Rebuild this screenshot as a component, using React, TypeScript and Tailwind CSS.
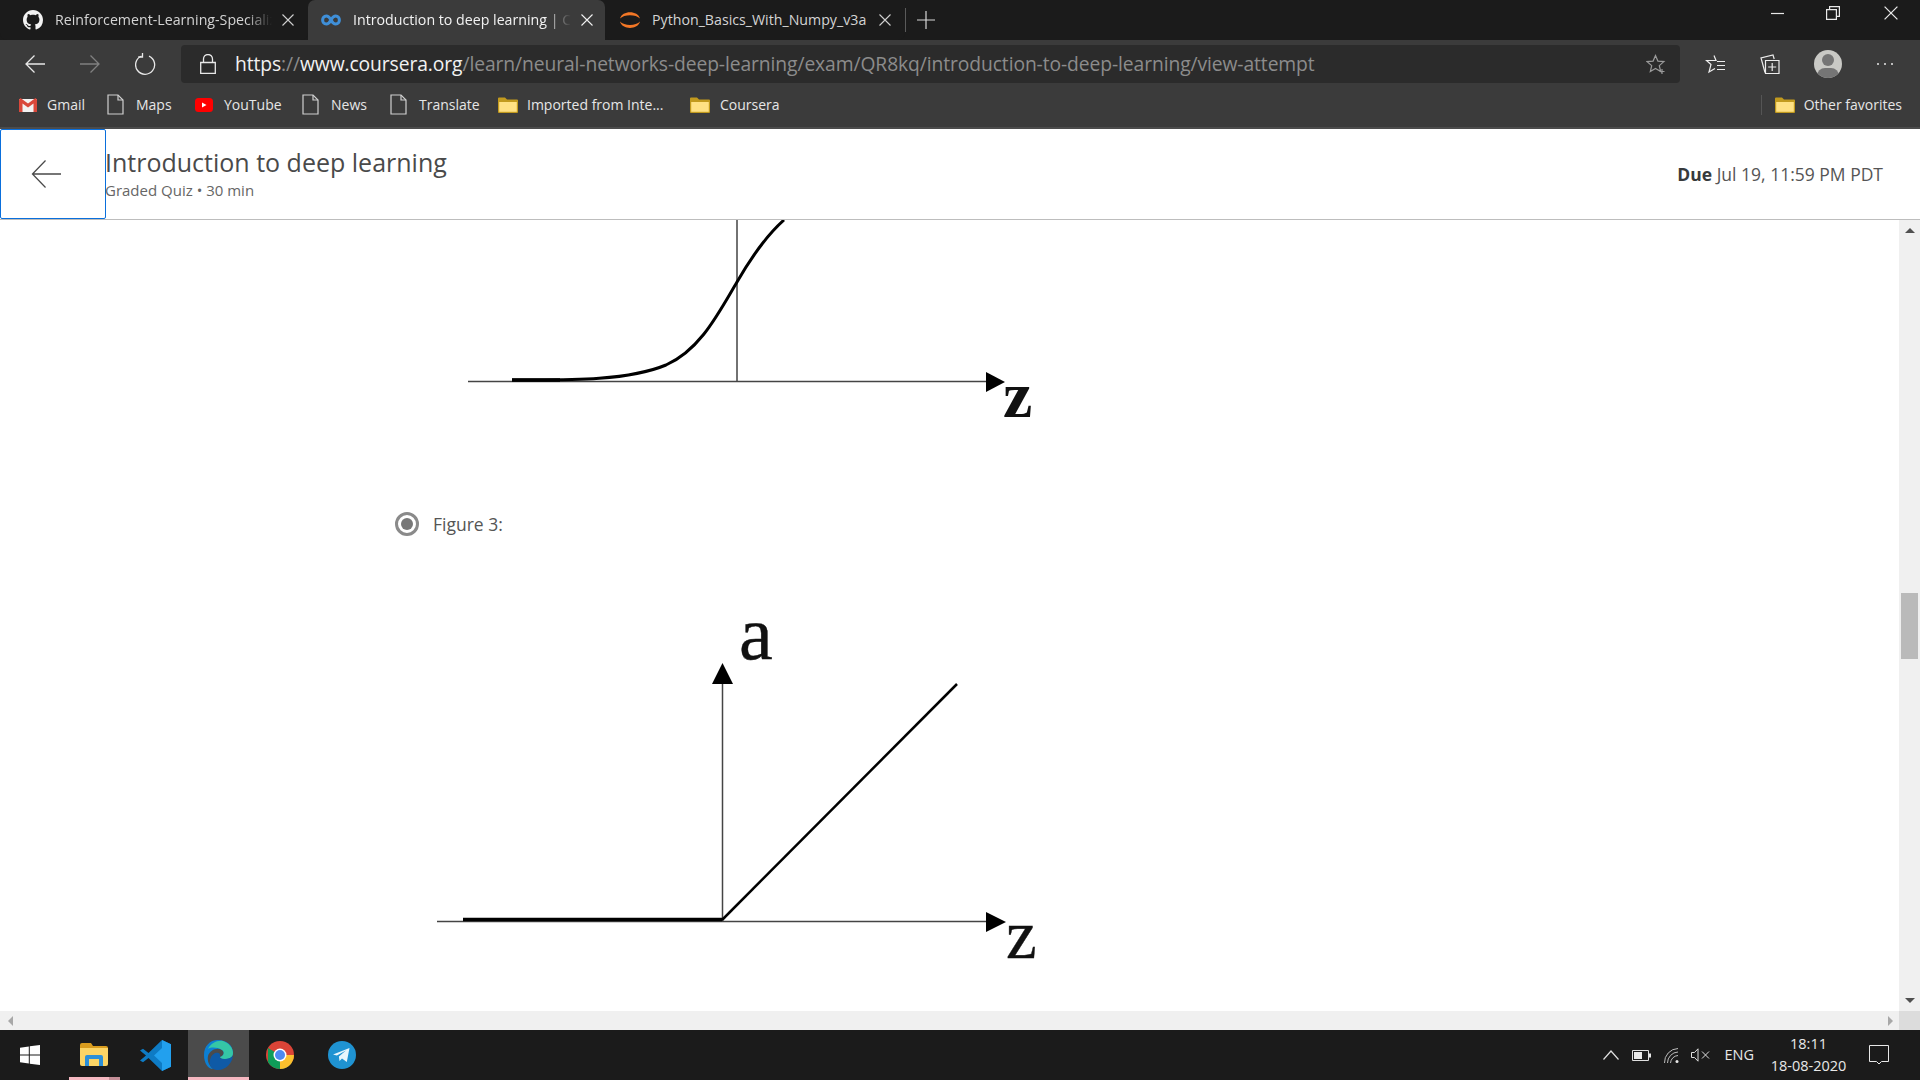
import React from 'react';

const ui = "font-['Open_Sans',sans-serif]";

function GithubIcon() {
  return (
    <svg width="20" height="20" viewBox="0 0 16 16" fill="#f2f2f2">
      <path d="M8 0C3.58 0 0 3.58 0 8c0 3.54 2.29 6.53 5.47 7.59.4.07.55-.17.55-.38 0-.19-.01-.82-.01-1.49-2.01.37-2.53-.49-2.69-.94-.09-.23-.48-.94-.82-1.13-.28-.15-.68-.52-.01-.53.63-.01 1.08.58 1.23.82.72 1.21 1.87.87 2.33.66.07-.52.28-.87.51-1.07-1.78-.2-3.64-.89-3.64-3.95 0-.87.31-1.59.82-2.15-.08-.2-.36-1.02.08-2.12 0 0 .67-.21 2.2.82.64-.18 1.32-.27 2-.27s1.36.09 2 .27c1.53-1.04 2.2-.82 2.2-.82.44 1.1.16 1.92.08 2.12.51.56.82 1.27.82 2.15 0 3.07-1.87 3.75-3.65 3.95.29.25.54.73.54 1.48 0 1.07-.01 1.93-.01 2.2 0 .21.15.46.55.38A8.01 8.01 0 0 0 16 8c0-4.42-3.58-8-8-8z" />
    </svg>
  );
}

function CourseraIcon() {
  return (
    <svg width="20" height="12" viewBox="0 0 20 12" fill="none" stroke="#3f8fd8" strokeWidth="3">
      <path d="M10 6C8.6 3.2 7.2 2 5.2 2 3 2 1.6 3.8 1.6 6s1.4 4 3.6 4c2 0 3.4-1.2 4.8-4s2.8-4 4.8-4c2.2 0 3.6 1.8 3.6 4s-1.4 4-3.6 4c-2 0-3.4-1.2-4.8-4z" />
    </svg>
  );
}

function JupyterIcon() {
  return (
    <svg width="20" height="20" viewBox="0 0 20 20" fill="#f37726">
      <path d="M0 8.500C2 0 18 0 20 8.500 16 4 4 4 0 8.500z" />
      <path d="M0 11.500C2 20 18 20 20 11.500 16 16 4 16 0 11.500z" />
    </svg>
  );
}

function CloseIcon({ size = 12, color = '#d8d8d8' }: { size?: number; color?: string }) {
  return (
    <svg width={size} height={size} viewBox="0 0 12 12" stroke={color} strokeWidth="1.1">
      <path d="M.5.5l11 11M11.500.5l-11 11" />
    </svg>
  );
}

function DocIcon() {
  return (
    <svg width="17" height="21" viewBox="0 0 17 21" fill="none" stroke="#d0d0d0" strokeWidth="1.2">
      <path d="M1 1h10l5 5v14H1z" />
      <path d="M11 1v5h5" />
    </svg>
  );
}

function FolderIcon() {
  return (
    <svg width="20" height="16" viewBox="0 0 20 16">
      <path d="M0 1.500A1 1 0 0 1 1 .5h6l2 2h10a1 1 0 0 1 1 1V15a1 1 0 0 1-1 1H1a1 1 0 0 1-1-1z" fill="#c29a1e" />
      <path d="M1.200 5h17.600v9.800H1.200z" fill="#ffe184" />
    </svg>
  );
}

function GmailIcon() {
  return (
    <svg width="18" height="14" viewBox="0 0 18 14">
      <path d="M0 1h18v13H0z" fill="#f2f2f2" />
      <path d="M0 1.500V14h3.500V5.500L9 9.500l5.500-4V14H18V1.500L16.500 0 9 5.500 1.500 0z" fill="#d9483b" />
    </svg>
  );
}

function YoutubeIcon() {
  return (
    <svg width="18" height="14" viewBox="0 0 18 14">
      <rect width="18" height="14" rx="3.500" fill="#f00" />
      <path d="M7 4.500L11.500 7 7 9.500z" fill="#fff" />
    </svg>
  );
}

function Bookmark({ icon, label, gap, width }: { icon: React.ReactNode; label: string; gap: string; width: string }) {
  return (
    <div className={`flex items-center ${gap} ${width}`}>
      {icon}
      <span className="whitespace-nowrap text-[14px] text-[#e6e6e6]">{label}</span>
    </div>
  );
}

function Tab({
  icon,
  label,
  width,
  pad,
  textWidth,
  active,
  fade,
}: {
  icon: React.ReactNode;
  label: string;
  width: string;
  pad: string;
  textWidth: string;
  active?: boolean;
  fade?: boolean;
}) {
  return (
    <div
      className={`flex h-[40px] shrink-0 items-center pb-[1px] ${width} ${pad} ${
        active ? 'rounded-t-[7px] bg-[#3b3b3b]' : 'rounded-b-[7px] bg-[#1b1b1b]'
      }`}
    >
      <div className="flex w-[20px] shrink-0 justify-center">{icon}</div>
      <div
        className={`ml-[12px] overflow-hidden whitespace-nowrap text-[14.200px] ${textWidth} ${active ? 'text-[#f2f2f2]' : 'text-[#d4d4d4]'} ${
          fade ? '[mask-image:linear-gradient(to_right,black_88%,transparent)]' : ''
        }`}
      >
        {label}
      </div>
      <div className="ml-[10px] shrink-0">
        <CloseIcon color={active ? '#f2f2f2' : '#d0d0d0'} />
      </div>
    </div>
  );
}

function TitleBar() {
  return (
    <div className="flex h-[40px] items-center bg-[#1b1b1b]">
      <Tab icon={<GithubIcon />} label="Reinforcement-Learning-Specialization" width="w-[308px]" pad="pl-[23px]" textWidth="w-[217px]" fade />
      <Tab icon={<CourseraIcon />} label="Introduction to deep learning | Coursera" width="w-[297px]" pad="pl-[13px]" textWidth="w-[218px]" active fade />
      <Tab icon={<JupyterIcon />} label="Python_Basics_With_Numpy_v3a" width="w-[300px]" pad="pl-[15px]" textWidth="w-[217px]" />
      <div className="h-[24px] w-px bg-[#5a5a5a]" />
      <svg className="ml-[11px]" width="18" height="18" viewBox="0 0 18 18" stroke="#d8d8d8" strokeWidth="1.200">
        <path d="M9 0v18M0 9h18" />
      </svg>
      <div className="ml-auto flex h-full items-start pt-[6px]">
        <svg width="14" height="14" viewBox="0 0 14 14" stroke="#e8e8e8" strokeWidth="1.200">
          <path d="M0 7.500h13" />
        </svg>
        <svg className="ml-[41px]" width="14" height="14" viewBox="0 0 14 14" fill="none" stroke="#e8e8e8" strokeWidth="1.200">
          <path d="M.6 3.600h9.800v9.800H.6zM3.600 3.600V.6h9.800v9.800h-3" />
        </svg>
        <div className="mx-[22px] ml-[44px]">
          <CloseIcon size={14} color="#e8e8e8" />
        </div>
      </div>
    </div>
  );
}

function Toolbar() {
  return (
    <div className="flex h-[43px] items-start bg-[#3b3b3b] pt-[5px]">
      <div className="flex h-[38px] w-[181px] shrink-0 items-center pl-[25px]">
        <svg width="20" height="18" viewBox="0 0 20 18" fill="none" stroke="#e8e8e8" strokeWidth="1.300">
          <path d="M20 9H1M9.500.5L1 9l8.500 8.500" />
        </svg>
        <svg className="ml-[35px]" width="20" height="18" viewBox="0 0 20 18" fill="none" stroke="#808080" strokeWidth="1.300">
          <path d="M0 9h19M10.500.5L19 9l-8.500 8.500" />
        </svg>
        <svg className="ml-[35px]" width="21" height="22" viewBox="0 0 21 22" fill="none" stroke="#e8e8e8" strokeWidth="1.300">
          <path d="M14 3.100A9.500 9.500 0 1 1 6.500 3" />
          <path d="M7.500-.2V4H3.200" />
        </svg>
      </div>
      <div className="flex h-[38px] w-[1499px] shrink-0 items-center rounded-[4px] bg-[#2b2b2b] pl-[19px]">
        <svg width="16" height="20" viewBox="0 0 16 20" fill="none" stroke="#e8e8e8" strokeWidth="1.300">
          <path d="M.7 8.500h14.600v11H.7zM3.500 8.500V5a4.500 4.500 0 0 1 9 0v3.500" />
        </svg>
        <div className="ml-[19px] whitespace-nowrap pt-[1px] text-[19.300px] tracking-[-0.1px] text-[#8c8c8c]">
          <span className="text-[#f2f2f2]">https</span>://<span className="text-[#f2f2f2]">www.coursera.org</span>
          /learn/neural-networks-deep-learning/exam/QR8kq/introduction-to-deep-learning/view-attempt
        </div>
        <svg className="ml-auto mr-[14px]" width="20" height="20" viewBox="0 0 20 20" fill="none" stroke="#9a9a9a" strokeWidth="1.200">
          <path d="M9.500 1.500l2.400 5.600 6 .5-4.600 4 1.400 5.900-5.200-3.100-5.200 3.100 1.400-5.900-4.600-4 6-.5zM16 15v5M13.500 17.500h5" />
        </svg>
      </div>
      <div className="flex h-[38px] flex-1 items-center pl-[25px]">
        <svg width="21" height="21" viewBox="0 0 21 21" fill="none" stroke="#ececec" strokeWidth="1.200">
          <path d="M9 1.500l2 5H1.500l4.500 4-2 7.500 6-3.500M12 7.500h8M12 11.500h8M12 15.500h8" />
        </svg>
        <svg className="ml-[34px]" width="20" height="20" viewBox="0 0 20 20" fill="none" stroke="#ececec" strokeWidth="1.200">
          <path d="M5 18.500L1 4l12-3 1.200 4" />
          <path d="M5.500 6.500h13.500v13H5.500zM12.200 9v8M8.200 13h8" />
        </svg>
        <div className="relative ml-[34px] h-[28px] w-[28px] overflow-hidden rounded-full bg-[#c9c9c5]">
          <div className="absolute left-[8px] top-[4px] h-[12px] w-[12px] rounded-full bg-[#757575]" />
          <div className="absolute left-[3px] top-[18px] h-[16px] w-[22px] rounded-full bg-[#757575]" />
        </div>
        <div className="ml-[35px] flex gap-[5px]">
          <div className="h-[2px] w-[2px] rounded-full bg-[#e8e8e8]" />
          <div className="h-[2px] w-[2px] rounded-full bg-[#e8e8e8]" />
          <div className="h-[2px] w-[2px] rounded-full bg-[#e8e8e8]" />
        </div>
      </div>
    </div>
  );
}

function BookmarksBar() {
  return (
    <div className="flex h-[46px] items-center border-b-2 border-[#4c4c4c] bg-[#3b3b3b] pb-[1px] pl-[19px]">
      <Bookmark icon={<GmailIcon />} label="Gmail" gap="gap-[10px]" width="w-[88px]" />
      <Bookmark icon={<DocIcon />} label="Maps" gap="gap-[12px]" width="w-[88px]" />
      <Bookmark icon={<YoutubeIcon />} label="YouTube" gap="gap-[11px]" width="w-[107px]" />
      <Bookmark icon={<DocIcon />} label="News" gap="gap-[12px]" width="w-[88px]" />
      <Bookmark icon={<DocIcon />} label="Translate" gap="gap-[12px]" width="w-[108px]" />
      <Bookmark icon={<FolderIcon />} label="Imported from Inte..." gap="gap-[9px]" width="w-[192px]" />
      <Bookmark icon={<FolderIcon />} label="Coursera" gap="gap-[10px]" width="w-[100px]" />
      <div className="ml-auto mr-[13px] h-[20px] w-px bg-[#555]" />
      <div className="pr-[18px]">
        <Bookmark icon={<FolderIcon />} label="Other favorites" gap="gap-[9px]" width="" />
      </div>
    </div>
  );
}

function PageHeader() {
  return (
    <div className="flex h-[91px] items-stretch border-b border-[#bdbdbd] bg-white">
      <div className="flex h-[90px] w-[106px] shrink-0 items-center rounded-[2px] border border-[#0a6fdc] pl-[30px]">
        <svg width="30" height="30" viewBox="0 0 31 30" fill="none" stroke="#4a4a4a" strokeWidth="1.300">
          <path d="M31 15H1.500M15 1L1.500 15 15 29" />
        </svg>
      </div>
      <div className="-ml-px flex flex-col pt-[15px]">
        <div className="text-[25px] leading-[36px] text-[#4a4a4a]">Introduction to deep learning</div>
        <div className="text-[15px] leading-[20px] text-[#666]">Graded Quiz • 30 min</div>
      </div>
      <div className="ml-auto self-center pr-[37px] text-[17.500px] text-[#555]">
        <span className="font-bold text-[#373a3c]">Due</span> Jul 19, 11:59 PM PDT
      </div>
    </div>
  );
}

function FigureTwo() {
  return (
    <svg className="ml-[430px] mt-[84px] block" width="620" height="351" viewBox="430 620 620 351">
      <path d="M437 921.500H990M722.500 684V921" stroke="#444" strokeWidth="1.500" fill="none" />
      <path d="M463 919.500H722" stroke="#000" strokeWidth="3.500" />
      <path d="M722 920L957 684" stroke="#000" strokeWidth="2.500" />
      <path d="M722.500 663L733 684H712zM1006 922L986 912V932z" fill="#000" />
      <text x="739" y="659" fontSize="76" stroke="#111" strokeWidth="0.4" className="font-['Liberation_Serif',serif]" fill="#111">
        a
      </text>
      <text x="1006" y="958" fontSize="69" stroke="#111" strokeWidth="0.4" className="font-['Liberation_Serif',serif]" fill="#111">
        z
      </text>
    </svg>
  );
}

function FigureOne() {
  return (
    <svg className="ml-[430px] block" width="620" height="200" viewBox="430 220 620 200">
      <path d="M468 381.500H990M737 220V381" stroke="#444" strokeWidth="1.500" fill="none" />
      <path
        d="M512 380C560 380 625 382 666 365C700 350 718 314 737 282C752 256 766 236 784 220"
        stroke="#000"
        strokeWidth="3"
        fill="none"
      />
      <path d="M512 380H560" stroke="#000" strokeWidth="3.500" />
      <path d="M1005 382L986 372V392z" fill="#000" />
      <text x="1003" y="417" fontSize="66" fontWeight="700" className="font-['Liberation_Serif',serif]" fill="#111">
        z
      </text>
    </svg>
  );
}

function VerticalScrollbar() {
  return (
    <div className="flex w-[21px] shrink-0 flex-col items-center bg-[#f0f0f0] pt-[8px]">
      <div className="h-0 w-0 border-x-[5px] border-b-[5px] border-x-transparent border-b-[#505050]" />
      <div className="mt-[360px] h-[66px] w-[17px] bg-[#bababa]" />
      <div className="mb-[8px] mt-auto h-0 w-0 border-x-[5px] border-t-[5px] border-x-transparent border-t-[#505050]" />
    </div>
  );
}

function Content() {
  return (
    <div className="flex h-[791px] bg-white">
      <div className="flex-1 overflow-hidden">
        <FigureOne />
        <div className="ml-[395px] mt-[92px] flex h-[24px] items-center">
          <div className="flex h-[24px] w-[24px] items-center justify-center rounded-full border-[3px] border-[#8a8a8a]">
            <div className="h-[12px] w-[12px] rounded-full bg-[#777]" />
          </div>
          <span className="ml-[14px] text-[17.500px] text-[#555]">Figure 3:</span>
        </div>
        <FigureTwo />
      </div>
      <VerticalScrollbar />
    </div>
  );
}

function HorizontalScrollbar() {
  return (
    <div className="flex h-[19px] items-center bg-[#f0f0f0] pl-[8px]">
      <div className="h-0 w-0 border-y-[5px] border-r-[5px] border-y-transparent border-r-[#a8a8a8]" />
      <div className="ml-auto mr-[6px] h-0 w-0 border-y-[5px] border-l-[5px] border-y-transparent border-l-[#a8a8a8]" />
      <div className="h-full w-[21px] bg-[#dcdcdc]" />
    </div>
  );
}

function TaskButton({ children, width, underline, active }: { children: React.ReactNode; width: string; underline?: boolean; active?: boolean }) {
  return (
    <div className={`relative flex h-full items-center justify-center ${width} ${active ? 'bg-[#4b4b4b]' : ''}`}>
      {children}
      {underline && (
        <div className={`absolute bottom-0 h-[3px] ${active ? 'inset-x-0' : 'left-[4px] right-[6px]'} bg-[#f5b8c1]`}>
          {!active && <div className="ml-auto h-full w-[11px] bg-[#c58f98]" />}
        </div>
      )}
    </div>
  );
}

function Taskbar() {
  return (
    <div className={`flex h-[50px] items-center bg-[#1b1b1b] ${ui}`}>
      <div className="flex h-full w-[65px] items-center pl-[20px]">
        <svg width="20" height="20" viewBox="0 0 20 20" fill="#fff">
          <path d="M0 2.800L8.800 1.500V9.500H0zM9.800 1.300L20 0V9.500H9.800zM0 10.500H8.800V18.500L0 17.200zM9.800 10.500H20V20L9.800 18.700z" />
        </svg>
      </div>
      <TaskButton width="w-[61px]" underline>
        <svg className="mr-[3px]" width="28" height="24" viewBox="0 0 28 24">
          <path d="M0 2a2 2 0 0 1 2-2h9l2 3h13a2 2 0 0 1 2 2v2H0z" fill="#d99c1e" />
          <path d="M0 5h28v16a2 2 0 0 1-2 2H2a2 2 0 0 1-2-2z" fill="#fbd465" />
          <path d="M5 23V14a2 2 0 0 1 2-2h14a2 2 0 0 1 2 2v9h-4v-7H9v7z" fill="#2b8fd8" />
        </svg>
      </TaskButton>
      <TaskButton width="w-[62px]">
        <svg className="mr-[4px]" width="31" height="31" viewBox="0 0 31 31">
          <path d="M22 0l9 4.300v22.400L22 31 8.500 18 3 22.300 0 20.500 6 15.500 0 10.500 3 8.700 8.500 13z" fill="#0e7bc4" />
          <path d="M22 0l9 4.300v22.400L22 31zM22 8l-8 7.500 8 7.500z" fill="#22a0ee" fillRule="evenodd" />
        </svg>
      </TaskButton>
      <TaskButton width="w-[61px]" underline active>
        <svg className="mr-[2px]" width="30" height="30" viewBox="0 0 30 30">
          <path d="M1 15C1 6 7 0 15 0c8 0 15 5 15 13 0 5-5 6-8 6-3 0-5-1-5-2 4-1 5-5 2-7-5-3-12 0-14 6-1 5 1 9 5 13C5 29 1 23 1 15z" fill="#0c7fd3" />
          <path d="M5 9C8 3 14 0 20 1c6 2 10 7 10 12 0 5-5 6-8 6-3 0-5-1-5-2 4-1 5-5 2-7-5-3-11-3-14-1z" fill="#35c6a6" />
          <path d="M17 17c0 2 3 2 5 2 3 0 6-1 8-3-1 7-7 14-15 14-4 0-7-2-8-5-1-5 1-10 5-12 3-1 6 0 5 4z" fill="#0f5aa6" />
        </svg>
      </TaskButton>
      <TaskButton width="w-[62px]">
        <svg width="28" height="28" viewBox="0 0 28 28">
          <circle cx="14" cy="14" r="14" fill="#db4437" />
          <path d="M14 14L26.100 21A14 14 0 0 1 14 28 14 14 0 0 1 1.900 21L2 7z" fill="#0f9d58" />
          <path d="M14 14h14A14 14 0 0 1 14 28z" fill="#fbc02d" />
          <circle cx="14" cy="14" r="6.500" fill="#fff" />
          <circle cx="14" cy="14" r="5" fill="#4d8af0" />
        </svg>
      </TaskButton>
      <TaskButton width="w-[62px]">
        <svg width="28" height="28" viewBox="0 0 28 28">
          <circle cx="14" cy="14" r="14" fill="#1f93d2" />
          <path d="M5 13.500L21.500 7l-2.700 14-4.800-3.500-2.500 2.500-.6-4.500 7-6-9 5z" fill="#eaf6fc" />
        </svg>
      </TaskButton>
      <div className="ml-auto flex h-full items-center pr-[31px] text-[#e8e8e8]">
        <svg width="16" height="10" viewBox="0 0 16 10" fill="none" stroke="#e0e0e0" strokeWidth="1.200">
          <path d="M.5 9.500L8 1l7.500 8.500" />
        </svg>
        <svg className="ml-[13px]" width="19" height="11" viewBox="0 0 19 11">
          <path d="M.5.500h16v10H.5z" fill="none" stroke="#e0e0e0" />
          <path d="M2 2h8v7H2zM17 3.500h2v4h-2z" fill="#e8e8e8" />
        </svg>
        <svg className="ml-[13px]" width="15" height="15" viewBox="0 0 15 15" fill="none" stroke="#bdbdbd">
          <path d="M.5 15A14 14 0 0 1 14 .5M3.500 15A11 11 0 0 1 14 4M6.500 15A8 8 0 0 1 14 7.500" />
          <circle cx="13" cy="13.500" r="1.500" fill="#e8e8e8" stroke="none" />
        </svg>
        <svg className="ml-[12px]" width="19" height="14" viewBox="0 0 19 14" fill="none" stroke="#e0e0e0">
          <path d="M.5 4.500h3L7 .8v12.400L3.500 9.500h-3zM11 3.500l7 7M18 3.500l-7 7" />
        </svg>
        <span className="ml-[14px] text-[14.500px]">ENG</span>
        <div className="ml-[17px] flex w-[75px] flex-col items-center text-[14.500px] leading-[22px]">
          <span>18:11</span>
          <span className="whitespace-nowrap">18-08-2020</span>
        </div>
        <svg className="ml-[23px]" width="20" height="20" viewBox="0 0 20 20" fill="none" stroke="#e8e8e8">
          <path d="M.5.500h19v16h-7l-2.500 2.500L7.500 16.500h-7z" />
        </svg>
      </div>
    </div>
  );
}

export default function App() {
  return (
    <div className={`flex h-[1080px] w-[1920px] flex-col overflow-hidden ${ui}`}>
      <TitleBar />
      <Toolbar />
      <BookmarksBar />
      <PageHeader />
      <Content />
      <HorizontalScrollbar />
      <Taskbar />
    </div>
  );
}
